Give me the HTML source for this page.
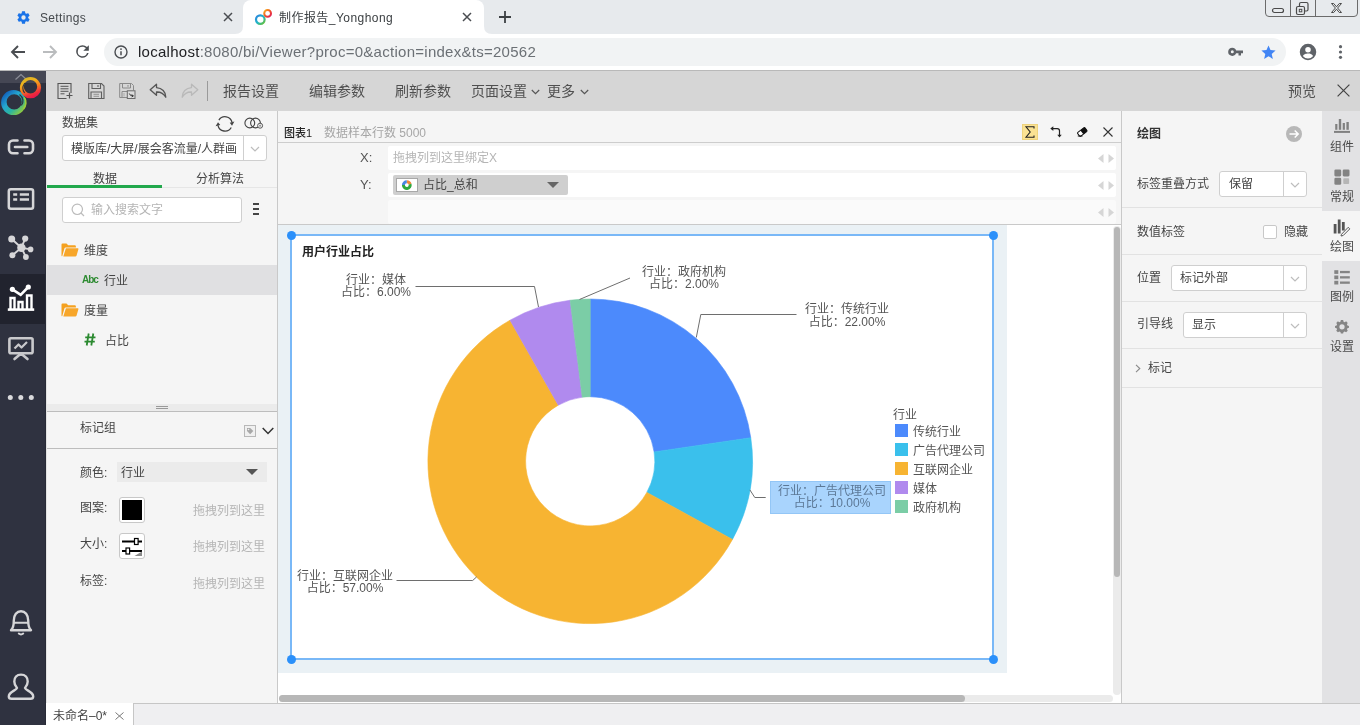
<!DOCTYPE html>
<html lang="zh-CN">
<head>
<meta charset="utf-8">
<title>制作报告_Yonghong</title>
<style>
*{box-sizing:border-box;margin:0;padding:0}
html,body{width:1360px;height:725px;overflow:hidden;background:#fff}
body{position:relative;font-family:"Liberation Sans","Noto Sans CJK SC",sans-serif;font-size:12px;color:#444;line-height:1}
.abs{position:absolute}
.t{position:absolute;white-space:nowrap;line-height:16px;height:16px;will-change:transform}
svg{position:absolute;overflow:visible}
/* ---------- browser chrome ---------- */
#tabbar{left:0;top:0;width:1360px;height:34px;background:#e7eaed}
#addr{left:0;top:34px;width:1360px;height:36px;background:#fff}
#chromeline{left:0;top:70px;width:1360px;height:1px;background:#b9b9b9}
#acttab{left:243px;top:0;width:241px;height:34px;background:#fff;border-radius:8px 8px 0 0}
#pill{left:104px;top:38px;width:1182px;height:28px;border-radius:14px;background:#f1f3f4}
#winctl{left:1265px;top:-2px;width:93px;height:19px;border:1px solid #6b6b6b;border-radius:0 0 4px 4px}
/* ---------- app ---------- */
#sidebar{left:0;top:71px;width:46px;height:654px;background:#2f3240}
#sidetop{left:0;top:71px;width:46px;height:12px;background:#454754}
#sideact{left:0;top:274px;width:46px;height:50px;background:#21232e}
#toolbar{left:46px;top:71px;width:1314px;height:40px;background:#d6d6d6}
#leftp{left:46px;top:111px;width:232px;height:592px;background:#f5f5f5;border-right:1px solid #c9c9c9}
#center{left:278px;top:111px;width:843px;height:592px;background:#f5f5f5}
#rightp{left:1121px;top:111px;width:201px;height:592px;background:#f5f5f5;border-left:1px solid #c9c9c9}
#rstrip{left:1322px;top:111px;width:38px;height:592px;background:#e2e2e4}
#bottombar{left:46px;top:703px;width:1314px;height:22px;background:#efeff1;border-top:1px solid #c6c6c6}
#btab{left:46px;top:703px;width:88px;height:22px;background:#fff;border-right:1px solid #c6c6c6}
.hl{position:absolute;height:1px;background:#e2e2e2}
.sel{position:absolute;background:#fff;border:1px solid #cfcfcf;border-radius:3px}
.sel i{position:absolute;top:0;bottom:0;width:1px;background:#cfcfcf}
.ph{color:#b5b5b5}
.rs{left:1322px;width:40px;text-align:center;color:#4a4a4a}
.hd{width:9px;height:9px;border-radius:50%;background:#2b90fa}
.tb{top:81px;font-size:14px;line-height:20px;height:20px;color:#505050}
</style>
</head>
<body>
<!-- ===== browser chrome ===== -->
<div class="abs" id="tabbar"></div>
<div class="abs" id="acttab"></div>
<div class="abs" id="addr"></div>
<div class="abs" id="pill"></div>
<div class="abs" id="chromeline"></div>
<div class="abs" id="winctl"></div>

<svg style="left:235px;top:26px" width="8" height="8" viewBox="0 0 8 8"><path d="M0 8Q8 8 8 0V8Z" fill="#fff"/></svg>
<svg style="left:484px;top:26px" width="8" height="8" viewBox="0 0 8 8"><path d="M8 8Q0 8 0 0V8Z" fill="#fff"/></svg>
<!-- tab 1 -->
<svg style="left:16px;top:10px" width="15" height="15" viewBox="0 0 24 24"><path fill="#1a73e8" d="M19.43 12.98c.04-.32.07-.64.07-.98s-.03-.66-.07-.98l2.11-1.65a.5.5 0 0 0 .12-.64l-2-3.46a.5.5 0 0 0-.61-.22l-2.49 1a7.3 7.3 0 0 0-1.69-.98l-.38-2.65A.49.49 0 0 0 14 2h-4a.49.49 0 0 0-.49.42l-.38 2.65c-.61.25-1.17.59-1.69.98l-2.49-1a.5.5 0 0 0-.61.22l-2 3.46a.5.5 0 0 0 .12.64l2.11 1.65c-.04.32-.07.65-.07.98s.03.66.07.98l-2.11 1.65a.5.5 0 0 0-.12.64l2 3.46c.12.22.39.3.61.22l2.49-1c.52.4 1.08.73 1.69.98l.38 2.65c.03.24.24.42.49.42h4c.25 0 .46-.18.49-.42l.38-2.65c.61-.25 1.17-.59 1.69-.98l2.49 1c.23.09.49 0 .61-.22l2-3.46a.5.5 0 0 0-.12-.64l-2.11-1.65zM12 15.5A3.5 3.5 0 1 1 12 8.5a3.5 3.5 0 0 1 0 7z"/></svg>
<div class="t" id="tab1t" style="left:40px;top:10px;font-size:12px;color:#45494d;letter-spacing:.33px">Settings</div>
<svg style="left:223px;top:12px" width="10" height="10" viewBox="0 0 10 10"><path d="M1 1L9 9M9 1L1 9" stroke="#4a4d51" stroke-width="1.5" fill="none"/></svg>
<!-- tab 2 favicon -->
<svg style="left:254px;top:8px" width="19" height="18" viewBox="0 0 19 18">
<defs><linearGradient id="fg1" x1="0" y1="0" x2="1" y2="1"><stop offset="0" stop-color="#2a7fe0"/><stop offset=".5" stop-color="#22b8c8"/><stop offset="1" stop-color="#6bbf2a"/></linearGradient>
<linearGradient id="fg2" x1="0" y1="0" x2="1" y2="1"><stop offset="0" stop-color="#f6b21a"/><stop offset=".5" stop-color="#f0522a"/><stop offset="1" stop-color="#e0195a"/></linearGradient></defs>
<circle cx="6.3" cy="11.6" r="4.3" fill="none" stroke="url(#fg1)" stroke-width="2.2"/>
<circle cx="13.6" cy="5.4" r="3.4" fill="none" stroke="url(#fg2)" stroke-width="2"/></svg>
<div class="t" id="tab2t" style="left:279px;top:10px;font-size:12px;color:#3c4043;letter-spacing:.45px">制作报告_Yonghong</div>
<svg style="left:462px;top:12px" width="10" height="10" viewBox="0 0 10 10"><path d="M1 1L9 9M9 1L1 9" stroke="#4a4d51" stroke-width="1.5" fill="none"/></svg>
<svg style="left:498px;top:10px" width="14" height="14" viewBox="0 0 14 14"><path d="M7 1V13M1 7H13" stroke="#3c4043" stroke-width="1.8" fill="none"/></svg>
<!-- window controls -->
<div class="abs" style="left:1290px;top:0;width:1px;height:16px;background:#6b6b6b"></div>
<div class="abs" style="left:1315px;top:0;width:1px;height:16px;background:#6b6b6b"></div>
<svg style="left:1266px;top:0" width="92" height="16" viewBox="0 0 92 16" fill="none" stroke="#4a4a4a" stroke-width="1.2">
<rect x="6.5" y="8.5" width="11" height="4" rx="2"/>
<rect x="30.5" y="6.5" width="8" height="8" rx="1.5"/><path d="M33.5 6.5V4a1.5 1.5 0 0 1 1.500-1.500h5.500a1.500 1.500 0 0 1 1.500 1.500v5.500a1.500 1.500 0 0 1-1.500 1.500H38.500"/><rect x="33.300" y="9.300" width="2.500" height="2.500" stroke-width="1"/>
<path d="M65.500 3.500h2.200l2.800 3.300 2.800-3.300h2.200l-3.900 4.500 3.900 4.500h-2.200l-2.800-3.300-2.800 3.300h-2.200l3.900-4.500z" stroke-width="1"/></svg>
<!-- nav icons -->
<svg style="left:10px;top:44px" width="16" height="16" viewBox="0 0 16 16"><path d="M15 8H2.500M8 2L2 8l6 6" stroke="#4a4d51" stroke-width="1.900" fill="none"/></svg>
<svg style="left:42px;top:44px" width="16" height="16" viewBox="0 0 16 16"><path d="M1 8h12.500M8 2l6 6-6 6" stroke="#babcbe" stroke-width="1.900" fill="none"/></svg>
<svg style="left:73px;top:42px" width="19" height="19" viewBox="0 0 24 24"><path fill="#4a4d51" d="M17.650 6.350A7.950 7.950 0 0 0 12 4a8 8 0 1 0 7.730 10h-2.080A6 6 0 1 1 12 6c1.660 0 3.140.690 4.220 1.780L13 11h7V4l-2.350 2.350z"/></svg>
<svg style="left:114px;top:45px" width="14" height="14" viewBox="0 0 14 14"><circle cx="7" cy="7" r="6" fill="none" stroke="#4a4d51" stroke-width="1.400"/><path d="M7 6.200V10.300" stroke="#4a4d51" stroke-width="1.500"/><circle cx="7" cy="4.100" r=".95" fill="#4a4d51"/></svg>
<div class="t" id="url" style="left:138px;top:43px;font-size:15px;line-height:18px;height:18px;color:#6b7075;letter-spacing:.27px"><span style="color:#202124">localhost</span>:8080/bi/Viewer?proc=0&amp;action=index&amp;ts=20562</div>
<!-- right icons -->
<svg style="left:1228px;top:47px" width="16" height="10" viewBox="0 0 16 10"><path fill="#5f6368" d="M4.300.700a4.100 4.100 0 1 0 3.850 5.500H10.500V8.400h2.500V6.200H15V3.500H8.150A4.100 4.100 0 0 0 4.300.700zm0 2.600a1.500 1.500 0 1 1 0 3 1.500 1.500 0 0 1 0-3z"/></svg>
<svg style="left:1259.500px;top:43.500px" width="17" height="17" viewBox="0 0 24 24"><path fill="#4285f4" d="M12 17.270L18.180 21l-1.640-7.030L22 9.240l-7.190-.610L12 2 9.190 8.630 2 9.240l5.460 4.730L5.820 21z"/></svg>
<svg style="left:1299px;top:43px" width="18" height="18" viewBox="0 0 24 24"><path fill="#5f6368" d="M12 1a11 11 0 1 0 0 22 11 11 0 0 0 0-22zm0 4.200a3.700 3.700 0 1 1 0 7.400 3.700 3.700 0 0 1 0-7.400zm0 15.400a8.600 8.600 0 0 1-6.600-3.100c.03-2.200 4.400-3.400 6.600-3.400s6.570 1.200 6.600 3.400a8.600 8.600 0 0 1-6.600 3.100z"/></svg>
<svg style="left:1338px;top:44px" width="5" height="16" viewBox="0 0 5 16"><circle cx="2.500" cy="2.700" r="1.600" fill="#5f6368"/><circle cx="2.500" cy="8" r="1.600" fill="#5f6368"/><circle cx="2.500" cy="13.300" r="1.600" fill="#5f6368"/></svg>


<!-- ===== app frame ===== -->
<div class="abs" id="toolbar"></div>
<div class="abs" id="sidebar"></div>
<div class="abs" id="sidetop"></div>
<div class="abs" id="sideact"></div>
<div class="abs" id="leftp"></div>
<div class="abs" style="left:45px;top:83px;width:1px;height:642px;background:#282b37"></div>
<div class="abs" style="left:46px;top:111px;width:1px;height:592px;background:#e2e2e2"></div>
<div class="abs" id="center"></div>
<div class="abs" id="rightp"></div>
<div class="abs" id="rstrip"></div>
<div class="abs" id="bottombar"></div>
<div class="abs" id="btab"></div>

<!-- toolbar icons -->
<svg style="left:57px;top:82px" width="17" height="18" viewBox="0 0 17 18" fill="none" stroke="#555" stroke-width="1.100">
<path d="M9.500 16.500H1V1.500H14V11"/><path d="M3.500 4.300H11.500M3.500 6.800H11.500M3.500 9.300H11.500M3.500 11.800H7.500" stroke-width="1"/><path d="M12.500 10.500V16.500M9.500 13.500H15.500" stroke-width="1.200"/></svg>
<svg style="left:88px;top:82px" width="17" height="18" viewBox="0 0 17 18" fill="none" stroke="#606060" stroke-width="1.100">
<path d="M.700 1.500H13.500L16 4V16.500H.700Z"/><path d="M4 1.500V6.500H12.500V1.500"/><path d="M10 3V5"/><path d="M3 16.500V10H13.500V16.500"/><path d="M5.500 12.300H11M5.500 14.300H11" stroke-width=".9" stroke="#8a8a8a"/></svg>
<svg style="left:119px;top:82px" width="17" height="18" viewBox="0 0 17 18" fill="none" stroke="#8a8a8a" stroke-width="1">
<path d="M.700 1.500H12.500L14.500 3.500V8.500"/><path d="M.700 1.500V15.500H8"/><path d="M3.500 1.500V6H11.500V1.500"/><path d="M9 3V4.800"/><path d="M3 15.500V9.500H8"/><path d="M5 11V14.500" stroke="#aaa"/>
<rect x="8.300" y="8.800" width="7.700" height="7.700" stroke="#6a6a6a" fill="#dcdcdc"/><path d="M10.300 11.500C11.300 13.800 12.500 14 14.300 13.800M14.300 13.800L12.600 12.600M14.300 13.800L12.800 15" stroke="#333" stroke-width="1"/></svg>
<svg style="left:149px;top:83px" width="19" height="16" viewBox="0 0 19 16" fill="none" stroke="#555" stroke-width="1.300" stroke-linejoin="round">
<path d="M7.500 1.200L1.200 6.800L7.500 12.300V9C11.500 8.800 14.500 10.200 16.800 14.300C16.800 8.800 13 5 7.500 4.600Z"/></svg>
<svg style="left:180px;top:83px" width="19" height="16" viewBox="0 0 19 16" fill="none" stroke="#b9b9b9" stroke-width="1.300" stroke-linejoin="round">
<path d="M11.500 1.200L17.800 6.800L11.500 12.300V9C7.500 8.800 4.500 10.200 2.200 14.300C2.200 8.800 6 5 11.500 4.600Z"/></svg>
<div class="abs" style="left:207px;top:81px;width:1px;height:20px;background:#9a9a9a"></div>
<div class="t tb" id="tb1" style="left:223px">报告设置</div>
<div class="t tb" id="tb2" style="left:309px">编辑参数</div>
<div class="t tb" id="tb3" style="left:395px">刷新参数</div>
<div class="t tb" id="tb4" style="left:471px">页面设置</div>
<div class="t tb" id="tb5" style="left:547px">更多</div>
<svg style="left:531px;top:89px" width="9" height="6" viewBox="0 0 9 6"><path d="M.800 1L4.500 4.600L8.200 1" stroke="#555" stroke-width="1.200" fill="none"/></svg>
<svg style="left:580px;top:89px" width="9" height="6" viewBox="0 0 9 6"><path d="M.800 1L4.500 4.600L8.200 1" stroke="#555" stroke-width="1.200" fill="none"/></svg>
<div class="t tb" id="tb6" style="left:1288px">预览</div>
<svg style="left:1337px;top:84px" width="13" height="13" viewBox="0 0 13 13"><path d="M.600 .600L12.400 12.400M12.400 .600L.600 12.400" stroke="#444" stroke-width="1.200" fill="none"/></svg>


<svg style="left:0;top:71px" width="46" height="654" viewBox="0 71 46 654" fill="none">
<defs>
<linearGradient id="lg1" x1="0" y1="0" x2="1" y2="1"><stop offset=".1" stop-color="#0f58b8"/><stop offset=".4" stop-color="#25a6d0"/><stop offset=".62" stop-color="#2bb5a0"/><stop offset=".85" stop-color="#8fc940"/><stop offset="1" stop-color="#b5d334"/></linearGradient>
<linearGradient id="lg2" x1=".3" y1="0" x2=".7" y2="1"><stop offset="0" stop-color="#d2b62c"/><stop offset=".25" stop-color="#f2b21c"/><stop offset=".5" stop-color="#f6821f"/><stop offset=".8" stop-color="#ee2a3c"/><stop offset="1" stop-color="#e5104f"/></linearGradient>
</defs>
<path d="M15.500 79.500L21 74.500L26.500 79.500" stroke="#8b8d96" stroke-width="1.200"/>
<path fill-rule="evenodd" fill="url(#lg1)" d="M1.100 102.600a12.500 12.500 0 1 0 25 0a12.500 12.500 0 1 0 -25 0ZM6.600 101.900a7.600 7.600 0 1 1 15.200 0a7.600 7.600 0 1 1 -15.200 0Z"/>
<path d="M19.500 94.500C23.500 97.500 24 102 21.300 105.300" stroke="#2f3240" stroke-width="1.300"/>
<path d="M24.200 97.500C27 101 26 106 23.500 109" stroke="#9ccc3c" stroke-width="1.600"/>
<path fill-rule="evenodd" fill="url(#lg2)" d="M19.900 87.700a10.600 10.600 0 1 0 21.200 0a10.600 10.600 0 1 0 -21.200 0ZM23.800 86.800a6.700 6.700 0 1 1 13.400 0a6.700 6.700 0 1 1 -13.400 0Z"/>
<path d="M24.800 83C22.300 86.500 22.600 90.500 24.600 93" stroke="#2f3240" stroke-width="1.100"/>
<!-- link -->
<g stroke="#d6d6d8" stroke-width="2.600" stroke-linecap="round">
<path d="M17.500 140.500H13A4 4 0 0 0 9 144.500V149.300A4 4 0 0 0 13 153.300H17.500"/>
<path d="M24.500 140.500H29A4 4 0 0 1 33 144.500V149.300A4 4 0 0 1 29 153.300H24.500"/>
<path d="M15 147H27.300"/></g>
<!-- list -->
<rect x="8.800" y="189.300" width="24.300" height="19.400" rx="2" stroke="#d6d6d8" stroke-width="2.500"/>
<path d="M13.200 194.600H17.200M19.800 194.600H29M13.200 199.500H17.200M19.800 199.500H29" stroke="#d6d6d8" stroke-width="2.500"/>
<!-- network -->
<g stroke="#d6d6d8" stroke-width="1.900"><path d="M21.400 247.700L11.700 239M21.400 247.700L25.200 238.600M21.400 247.700L30.600 249.400M21.400 247.700L25.900 257M21.400 247.700L12.400 255.200"/></g>
<g fill="#d6d6d8"><circle cx="21.400" cy="247.700" r="4.200"/><circle cx="11.700" cy="239" r="3.500"/><circle cx="25.200" cy="238.600" r="3.100"/><circle cx="30.600" cy="249.400" r="2.800"/><circle cx="25.900" cy="257" r="2.900"/><circle cx="12.400" cy="255.200" r="3"/></g>
<!-- chart (active) -->
<g stroke="#fff" stroke-width="2.400"><path d="M7.800 309.600H34.200" stroke-width="2.600"/>
<path d="M10.500 309V298H14.500V309M18.500 309V302H22.500V309M27 309V295.500H31.500V309"/>
<path d="M12.400 289.300L20.700 294.900L28.300 287" stroke-width="2.600"/></g>
<g fill="#fff"><circle cx="12.400" cy="289.300" r="2.600"/><circle cx="28.300" cy="287" r="2.600"/></g>
<!-- presentation -->
<g stroke="#c9c9cc" stroke-width="2.600" stroke-linejoin="round"><rect x="9.400" y="338.300" width="23.200" height="15" rx="1.500"/><path d="M21 353.500L14.500 359M21 353.500L27.500 359" stroke-linecap="round"/><path d="M14.500 348.500L18.500 344.500L21.500 347.500L27 342" stroke-width="2.200"/></g>
<!-- dots -->
<g fill="#dadadc"><circle cx="10.300" cy="397.500" r="2.500"/><circle cx="20.800" cy="397.500" r="2.500"/><circle cx="31.300" cy="397.500" r="2.500"/></g>
<!-- bell -->
<g stroke="#d6d6d8" stroke-width="2.400" stroke-linejoin="round" stroke-linecap="round">
<path d="M11 630.200C13.300 628.200 13.800 625 13.800 620.500C13.800 615 16.800 611.300 21 611.300C25.200 611.300 28.200 615 28.200 620.500C28.200 625 28.700 628.200 31 630.200Z"/>
<path d="M14 622.800H28" stroke-width="2"/><path d="M18.800 633.600Q21 635.400 23.200 633.600" stroke-width="2"/></g>
<!-- user -->
<g stroke="#d6d6d8" stroke-width="2.400" stroke-linejoin="round">
<path d="M21 674.600C25.300 674.600 27.700 677.800 27.700 681.500C27.700 684.300 26.300 686.600 25 688C25.600 690.500 33.200 691.500 33.200 696.500C33.200 698.200 32.200 698.800 30.500 698.800H11.500C9.800 698.800 8.800 698.200 8.800 696.500C8.800 691.500 16.400 690.500 17 688C15.700 686.600 14.300 684.300 14.300 681.500C14.300 677.800 16.700 674.600 21 674.600Z"/></g>
</svg>


<div class="t" id="l_ds" style="left:62px;top:115px">数据集</div>
<!-- refresh icon -->
<svg style="left:216.300px;top:115.400px" width="18" height="18" viewBox="0 0 18 18" fill="none" stroke="#444" stroke-width="1.300">
<path d="M2.89 5.08A7.2 7.2 0 0 1 16.04 7.40"/><path d="M15.24 12.50A7.2 7.2 0 0 1 1.96 10.40"/>
<path d="M15.99 10.64L13.75 7.71L18.41 6.55Z" fill="#444" stroke="none"/><path d="M2.01 7.16L4.25 10.09L-0.41 11.25Z" fill="#444" stroke="none"/></svg>
<!-- join icon -->
<svg style="left:243.600px;top:117.300px" width="20" height="13" viewBox="0 0 20 13" fill="none" stroke="#444" stroke-width="1.100">
<circle cx="5.800" cy="6" r="4.900"/><circle cx="11.500" cy="6" r="4.900"/><circle cx="16.100" cy="8.700" r="2.500" fill="#f5f5f5" stroke="#555" stroke-width="1"/><path d="M16.100 7.600V9.800M15 8.700H17.200" stroke-width=".7" stroke="#777"/></svg>
<div class="sel" style="left:62px;top:135px;width:205px;height:26px"><i style="left:180px"></i></div>
<div class="t" id="l_path" style="left:71px;top:141px;letter-spacing:0">模版库/大屏/展会客流量/人群画</div>
<svg style="left:250px;top:146px" width="10" height="6" viewBox="0 0 10 6"><path d="M1 1L5 5L9 1" stroke="#bdbdbd" stroke-width="1.200" fill="none"/></svg>
<div class="t" id="l_t1" style="left:93px;top:171px">数据</div>
<div class="t" id="l_t2" style="left:196px;top:171px">分析算法</div>
<div class="abs" style="left:47px;top:187px;width:230px;height:1px;background:#e6e6e6"></div>
<div class="abs" style="left:47px;top:185px;width:115px;height:3px;background:#21a84c"></div>
<div class="sel" style="left:62px;top:197px;width:180px;height:26px"></div>
<svg style="left:71px;top:203px" width="14" height="14" viewBox="0 0 14 14" fill="none" stroke="#bcbcbc" stroke-width="1.200"><circle cx="6.300" cy="6.300" r="5.200"/><path d="M10 10L13 13"/></svg>
<div class="t ph" id="l_ph" style="left:91px;top:202px">输入搜索文字</div>
<div class="abs" style="left:253px;top:203px;width:6px;height:2px;background:#444;box-shadow:0 5px 0 #444,0 10px 0 #444"></div>
<!-- tree -->
<div class="abs" style="left:47px;top:265px;width:230px;height:30px;background:#e0e0e2"></div>
<svg style="left:61px;top:243px" width="18" height="14" viewBox="0 0 18 14"><path fill="#f5a11f" d="M.500 12.500V1.600Q.500.500 1.600.500H5.500L7.200 2.300H13.800Q14.900 2.300 14.900 3.400V4.400H4.700Q3.700 4.400 3.400 5.400L1.300 12.900Q.500 13.500.500 12.500Z"/><path fill="#f7a62a" d="M4.900 5.300H16.800Q17.700 5.300 17.400 6.200L15.500 12.800Q15.200 13.600 14.300 13.600H2.300Z"/></svg>
<div class="t" style="left:84px;top:243px">维度</div>
<div class="t" style="left:82px;top:272px;font-size:10px;font-weight:bold;color:#2e8b32;letter-spacing:-1px">Abc</div>
<div class="t" style="left:104px;top:273px">行业</div>
<svg style="left:61px;top:303px" width="18" height="14" viewBox="0 0 18 14"><path fill="#f5a11f" d="M.500 12.500V1.600Q.500.500 1.600.500H5.500L7.200 2.300H13.800Q14.900 2.300 14.900 3.400V4.400H4.700Q3.700 4.400 3.400 5.400L1.300 12.900Q.500 13.500.500 12.500Z"/><path fill="#f7a62a" d="M4.900 5.300H16.800Q17.700 5.300 17.400 6.200L15.500 12.800Q15.200 13.600 14.300 13.600H2.300Z"/></svg>
<div class="t" style="left:84px;top:303px">度量</div>
<svg style="left:84px;top:333px" width="12" height="13" viewBox="0 0 12 13" fill="none" stroke="#2b8a30" stroke-width="1.800"><path d="M4.700 .500L2.700 12.500M9.300 .500L7.300 12.500M1.200 4.300H11.500M.500 8.700H10.800"/></svg>
<div class="t" style="left:105px;top:333px">占比</div>
<!-- splitter -->
<div class="abs" style="left:47px;top:404px;width:230px;height:7px;background:#ebebeb"></div>
<div class="abs" style="left:156px;top:406px;width:12px;height:1px;background:#9a9a9a;box-shadow:0 2px 0 #9a9a9a"></div>
<div class="abs" style="left:47px;top:411px;width:230px;height:1px;background:#bdbdbd"></div>
<div class="t" style="left:80px;top:420px">标记组</div>
<svg style="left:244px;top:424.500px" width="12" height="12" viewBox="0 0 12 12"><rect x=".500" y=".500" width="11" height="11" fill="#f0f0f0" stroke="#b8b8b8"/><path d="M3 3H6.200L9.300 6.100L6.200 9.200L3 6.100Z" fill="#a8a8a8"/><circle cx="4.500" cy="4.500" r=".800" fill="#f0f0f0"/></svg>
<svg style="left:262px;top:427px" width="12" height="8" viewBox="0 0 12 8"><path d="M.700 1L6 6.500L11.300 1" stroke="#333" stroke-width="1.500" fill="none"/></svg>
<div class="abs" style="left:47px;top:448px;width:230px;height:1px;background:#bdbdbd"></div>
<div class="t" style="left:80px;top:465px">颜色:</div>
<div class="abs" style="left:117px;top:462px;width:150px;height:20px;background:#ebebeb"></div>
<div class="t" style="left:121px;top:465px">行业</div>
<svg style="left:246px;top:469px" width="12" height="6" viewBox="0 0 12 6"><path d="M0 0H12L6 6Z" fill="#555"/></svg>
<div class="t" style="left:80px;top:500px">图案:</div>
<div class="abs" style="left:119px;top:497px;width:26px;height:26px;background:#fff;border:1px solid #c8c8c8;border-radius:3px"></div>
<div class="abs" style="left:122px;top:500px;width:20px;height:20px;background:#000"></div>
<div class="t ph" style="left:193px;top:503px">拖拽列到这里</div>
<div class="t" style="left:80px;top:536px">大小:</div>
<div class="abs" style="left:119px;top:533px;width:26px;height:26px;background:#fff;border:1px solid #c8c8c8;border-radius:3px"></div>
<svg style="left:122px;top:536px" width="20" height="20" viewBox="0 0 20 20"><path d="M0 5.500H20M0 15H20" stroke="#000" stroke-width="2"/><rect x="12.500" y="2.500" width="3.600" height="6" fill="#fff" stroke="#000" stroke-width="1.200"/><rect x="4" y="12" width="3.600" height="6" fill="#fff" stroke="#000" stroke-width="1.200"/><path d="M12.500 20H20V15.500Z" fill="#8a8a8a"/></svg>
<div class="t ph" style="left:193px;top:539px">拖拽列到这里</div>
<div class="t" style="left:80px;top:573px">标签:</div>
<div class="t ph" style="left:193px;top:576px">拖拽列到这里</div>


<div class="t" id="c_t1" style="left:284px;top:125px;font-size:11px;color:#222;font-weight:500">图表1</div>
<div class="t" id="c_t2" style="left:324px;top:125px;color:#a6a6a6">数据样本行数 5000</div>
<!-- header icons -->
<div class="abs" style="left:1022px;top:124px;width:16px;height:16px;background:#fae293;border:1px solid #efd47e"></div>
<svg style="left:1025px;top:126px" width="10" height="12" viewBox="0 0 10 12"><path d="M9 2.500V.800H1L5.200 6L1 11.200H9V9.500" stroke="#222" stroke-width="1.100" fill="none" stroke-linejoin="miter"/></svg>
<svg style="left:1049px;top:125px" width="14" height="14" viewBox="0 0 14 14" fill="none" stroke="#222" stroke-width="1.200"><path d="M2.500 3.600H8.300Q10.500 3.600 10.500 5.800V10.500"/><path d="M4.300 1.300L1.300 3.600L4.300 5.900Z" fill="#222" stroke="none"/><path d="M8.300 9.800L10.500 12.600L12.700 9.800Z" fill="#222" stroke="none"/></svg>
<svg style="left:1076px;top:126px" width="13" height="11" viewBox="0 0 13 11"><g transform="rotate(-38 6.200 6)"><rect x="1.700" y="3.600" width="9.200" height="4.800" rx=".9" fill="#fff" stroke="#111" stroke-width="1"/><rect x="5.700" y="3.600" width="5.200" height="4.800" rx=".8" fill="#111"/></g><path d="M1.800 10H6.500" stroke="#111" stroke-width="1"/></svg>
<svg style="left:1103px;top:127px" width="10" height="10" viewBox="0 0 10 10"><path d="M.500 .500L9.500 9.500M9.500 .500L.500 9.500" stroke="#333" stroke-width="1.100" fill="none"/></svg>
<div class="abs" style="left:278px;top:142px;width:843px;height:1px;background:#cdcdcd"></div>
<!-- shelves -->
<div class="abs" style="left:388px;top:146px;width:728px;height:24px;background:#fff;border-radius:2px"></div>
<div class="abs" style="left:388px;top:173px;width:728px;height:24px;background:#fff;border-radius:2px"></div>
<div class="abs" style="left:388px;top:200px;width:728px;height:24px;background:#fafafa;border-radius:2px"></div>
<div class="t" style="left:360px;top:150px;font-size:13px;color:#555">X:</div>
<div class="t" style="left:360px;top:177px;font-size:13px;color:#555">Y:</div>
<div class="t ph" id="c_ph" style="left:393px;top:150px">拖拽列到这里绑定X</div>
<div class="abs" style="left:393px;top:175px;width:175px;height:20px;background:#cfcfcf;border-radius:2px"></div>
<div class="abs" style="left:396px;top:178px;width:22px;height:14px;background:#fff;border:1px solid #a8a8a8"></div>
<svg style="left:401px;top:179px" width="12" height="12" viewBox="0 0 12 12" fill="none" stroke-width="3"><path d="M5.80 2.70A3.4 3.4 0 0 1 9.08 5.22" stroke="#f0883a"/><path d="M9.08 5.22A3.4 3.4 0 1 1 2.40 6.10" stroke="#2fa83e"/><path d="M2.40 6.10A3.4 3.4 0 0 1 5.80 2.70" stroke="#4a86e0"/></svg>
<div class="t" id="c_y" style="left:423px;top:177px;color:#484848">占比_总和</div>
<svg style="left:547px;top:182px" width="12" height="6" viewBox="0 0 12 6"><path d="M0 0H12L6 6Z" fill="#666"/></svg>
<svg style="left:1098px;top:154px" width="16" height="9" viewBox="0 0 16 9"><path d="M5.500 0V9L0 4.500ZM10.500 0V9L16 4.500Z" fill="#d6d6d6"/></svg>
<svg style="left:1098px;top:181px" width="16" height="9" viewBox="0 0 16 9"><path d="M5.500 0V9L0 4.500ZM10.500 0V9L16 4.500Z" fill="#d6d6d6"/></svg>
<svg style="left:1098px;top:208px" width="16" height="9" viewBox="0 0 16 9"><path d="M5.500 0V9L0 4.500ZM10.500 0V9L16 4.500Z" fill="#d6d6d6"/></svg>
<div class="abs" style="left:278px;top:224px;width:843px;height:1px;background:#c9c9c9"></div>
<!-- canvas -->
<div class="abs" style="left:278px;top:225px;width:843px;height:478px;background:#fff"></div>
<div class="abs" style="left:278px;top:225px;width:729px;height:448px;background:#eaf1f5"></div>
<div class="abs" style="left:290px;top:234px;width:704px;height:426px;background:#fff;border:2px solid #79b8f7"></div>
<div class="abs hd" style="left:286.500px;top:231.400px"></div><div class="abs hd" style="left:988.800px;top:231.400px"></div>
<div class="abs hd" style="left:286.500px;top:654.500px"></div><div class="abs hd" style="left:988.800px;top:654.500px"></div>
<!-- scrollbars -->
<div class="abs" style="left:1113px;top:226px;width:8px;height:469px;background:#ebebeb;border-radius:4px"></div>
<div class="abs" style="left:1114px;top:227px;width:6px;height:350px;background:#b7b7b7;border-radius:3px"></div>
<div class="abs" style="left:279px;top:695px;width:834px;height:7px;background:#ebebeb;border-radius:4px"></div>
<div class="abs" style="left:279px;top:695px;width:686px;height:7px;background:#b7b7b7;border-radius:4px"></div>

<svg style="left:0;top:0" width="1360" height="725" viewBox="0 0 1360 725">
<path fill="#4c8afc" stroke="#4c8afc" stroke-width=".6" d="M590.20 299.00A162.3 162.3 0 0 1 750.78 437.73L654.12 451.92A64.6 64.6 0 0 0 590.20 396.70Z"/>
<path fill="#3ac0ec" stroke="#3ac0ec" stroke-width=".6" d="M750.78 437.73A162.3 162.3 0 0 1 732.48 539.39L646.83 492.38A64.6 64.6 0 0 0 654.12 451.92Z"/>
<path fill="#f7b432" stroke="#f7b432" stroke-width=".6" d="M732.48 539.39A162.3 162.3 0 1 1 510.03 320.18L558.29 405.13A64.6 64.6 0 1 0 646.83 492.38Z"/>
<path fill="#b08aee" stroke="#b08aee" stroke-width=".6" d="M510.03 320.18A162.3 162.3 0 0 1 570.14 300.24L582.22 397.20A64.6 64.6 0 0 0 558.29 405.13Z"/>
<path fill="#7bcda6" stroke="#7bcda6" stroke-width=".6" d="M570.14 300.24A162.3 162.3 0 0 1 590.20 299.00L590.20 396.70A64.6 64.6 0 0 0 582.22 397.20Z"/>
<g fill="none" stroke="#6e6e6e" stroke-width="1">
<path d="M415.500 286.500H534.500L538.500 307"/>
<path d="M579.500 299.500L630 278"/>
<path d="M696.300 337.500L700.800 314.500H796.500"/>
<path d="M749.900 489.900L754.800 497.500H765.700"/>
<path d="M396.500 580.500H472.700L476.700 576.800"/>
</g>
<rect x="770.500" y="481.500" width="120" height="32" fill="#a9d4fd" stroke="#93c6f6"/>
<g font-family="'Liberation Sans','Noto Sans CJK SC',sans-serif" font-size="12" fill="#555" text-anchor="middle">
<text x="376" y="283.500">行业：媒体</text><text x="376" y="295.500">占比：6.00%</text>
<text x="684" y="275.500">行业：政府机构</text><text x="684" y="287.500">占比：2.00%</text>
<text x="847" y="313">行业：传统行业</text><text x="847" y="325.500">占比：22.00%</text>
<text x="345" y="579.500">行业：互联网企业</text><text x="345" y="591.500">占比：57.00%</text>
<g fill="#5c7896"><text x="832" y="494.600">行业：广告代理公司</text><text x="832" y="506.500">占比：10.00%</text></g>
</g>
<g font-family="'Liberation Sans','Noto Sans CJK SC',sans-serif" font-size="12" fill="#555">
<text x="302" y="255.500" font-weight="bold" fill="#222">用户行业占比</text>
<text x="893" y="418.500">行业</text>
<text x="913" y="435.500">传统行业</text><text x="913" y="454.500">广告代理公司</text><text x="913" y="473.500">互联网企业</text><text x="913" y="492.500">媒体</text><text x="913" y="511.500">政府机构</text>
</g>
<rect x="895" y="424" width="13" height="13" fill="#4c8afc"/><rect x="895" y="443" width="13" height="13" fill="#3ac0ec"/><rect x="895" y="462" width="13" height="13" fill="#f7b432"/><rect x="895" y="481" width="13" height="13" fill="#b08aee"/><rect x="895" y="500" width="13" height="13" fill="#7bcda6"/>
</svg>


<div class="abs" style="left:1322px;top:211px;width:38px;height:50px;background:#f5f5f5"></div>
<div class="t" style="left:1137px;top:126px;font-weight:bold;color:#333">绘图</div>
<svg style="left:1286px;top:126px" width="16" height="16" viewBox="0 0 16 16"><circle cx="8" cy="8" r="8" fill="#b8b8b8"/><path d="M3.500 8H12M8.700 4.500L12.200 8L8.700 11.500" stroke="#fff" stroke-width="1.500" fill="none"/></svg>
<div class="t" style="left:1137px;top:176px">标签重叠方式</div>
<div class="sel" style="left:1219px;top:171px;width:88px;height:26px"><i style="left:63px"></i></div>
<div class="t" style="left:1229px;top:176px">保留</div>
<svg style="left:1290px;top:182px" width="10" height="6" viewBox="0 0 10 6"><path d="M1 1L5 5L9 1" stroke="#bdbdbd" stroke-width="1.200" fill="none"/></svg>
<div class="hl" style="left:1122px;top:207px;width:200px"></div>
<div class="t" style="left:1137px;top:224px">数值标签</div>
<div class="abs" style="left:1263px;top:225px;width:14px;height:14px;background:#fff;border:1px solid #c8c8c8;border-radius:2px"></div>
<div class="t" style="left:1284px;top:224px">隐藏</div>
<div class="hl" style="left:1122px;top:254px;width:200px"></div>
<div class="t" style="left:1137px;top:270px">位置</div>
<div class="sel" style="left:1171px;top:265px;width:136px;height:26px"><i style="left:111px"></i></div>
<div class="t" style="left:1180px;top:270px">标记外部</div>
<svg style="left:1290px;top:276px" width="10" height="6" viewBox="0 0 10 6"><path d="M1 1L5 5L9 1" stroke="#bdbdbd" stroke-width="1.200" fill="none"/></svg>
<div class="hl" style="left:1122px;top:301px;width:200px"></div>
<div class="t" style="left:1137px;top:316px">引导线</div>
<div class="sel" style="left:1183px;top:312px;width:124px;height:26px"><i style="left:99px"></i></div>
<div class="t" style="left:1192px;top:317px">显示</div>
<svg style="left:1290px;top:323px" width="10" height="6" viewBox="0 0 10 6"><path d="M1 1L5 5L9 1" stroke="#bdbdbd" stroke-width="1.200" fill="none"/></svg>
<div class="hl" style="left:1122px;top:348px;width:200px"></div>
<svg style="left:1135px;top:364px" width="6" height="9" viewBox="0 0 6 9"><path d="M1 .800L4.800 4.500L1 8.200" stroke="#8a8a8a" stroke-width="1.100" fill="none"/></svg>
<div class="t" style="left:1148px;top:360px">标记</div>
<div class="hl" style="left:1122px;top:387px;width:200px"></div>
<!-- right strip tabs -->
<svg style="left:1322px;top:111px" width="38" height="260" viewBox="1322 111 38 260">
<g fill="#808080"><rect x="1335.200" y="124" width="2.200" height="5.800"/><rect x="1338.800" y="119" width="2.400" height="10.800"/><rect x="1342.700" y="123" width="2.200" height="6.800"/><rect x="1346.400" y="122" width="2.400" height="7.800"/><rect x="1334" y="130.900" width="16" height="2"/></g>
<g><rect x="1334.400" y="169.400" width="6.800" height="7" rx="1.300" fill="#838383"/><rect x="1342.700" y="169.400" width="6.800" height="7" rx="1.300" fill="#838383"/><rect x="1334.400" y="177.700" width="6.800" height="7" rx="1.300" fill="#838383"/><rect x="1343.300" y="178.300" width="5.800" height="5.800" rx=".8" fill="#b6b6b6"/></g>
<g fill="#555"><rect x="1333.700" y="224" width="2.800" height="9.500"/><rect x="1337.800" y="219.500" width="2.800" height="14"/><rect x="1341.900" y="222" width="2.800" height="8.500"/></g>
<path d="M1341.500 234.300L1348.200 227.300L1349.800 228.900L1343.200 235.500L1341 236Z" fill="#f5f5f5" stroke="#555" stroke-width="1"/>
<g fill="#848484"><rect x="1334.300" y="270.200" width="4" height="3.700"/><rect x="1334.300" y="275.500" width="4" height="3.700"/><rect x="1334.300" y="280.800" width="4" height="3.700"/><rect x="1340" y="270.900" width="9.800" height="2.300"/><rect x="1340" y="276.200" width="9.800" height="2.300"/><rect x="1340" y="281.500" width="9.800" height="2.300"/></g>
<g transform="translate(1342 327)"><path fill="#858585" fill-rule="evenodd" d="M-1.400 -7.200H1.400L1.900 -5.300L3.300 -4.700L5 -5.700L7 -3.700L6 -2L6.600 -.600L8.500 -.100V2.100L6.600 2.600L6 4L7 5.700L5 7.700L3.300 6.700L1.900 7.300L1.400 9.200H-1.400L-1.900 7.300L-3.300 6.700L-5 7.700L-7 5.700L-6 4L-6.600 2.600L-8.500 2.100V-.100L-6.600 -.600L-6 -2L-7 -3.700L-5 -5.700L-3.300 -4.700L-1.900 -5.300ZM0 -2.200A3.200 3.200 0 1 0 0 4.200A3.200 3.200 0 1 0 0 -2.200Z" transform="translate(0 -1) scale(.82)"/></g>
</svg>
<div class="t rs" style="top:139px">组件</div>
<div class="t rs" style="top:189px">常规</div>
<div class="t rs" style="top:239px">绘图</div>
<div class="t rs" style="top:289px">图例</div>
<div class="t rs" style="top:339px">设置</div>


<div class="t" id="b_t" style="left:53px;top:708px">未命名–0*</div>
<svg style="left:115px;top:712px" width="9" height="8" viewBox="0 0 9 8"><path d="M.500 .500L8.500 7.500M8.500 .500L.500 7.500" stroke="#777" stroke-width="1" fill="none"/></svg>

</body>
</html>
